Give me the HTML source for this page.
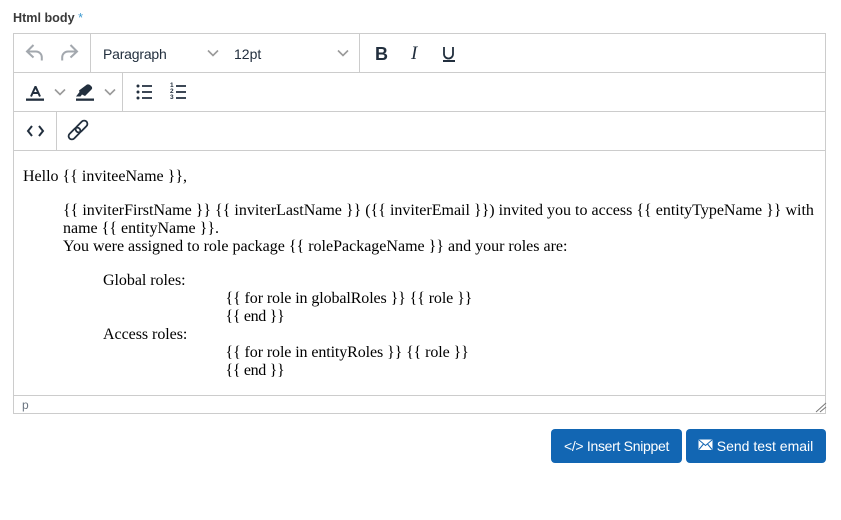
<!DOCTYPE html>
<html><head><meta charset="utf-8"><style>
html,body{margin:0;padding:0;background:#fff;width:841px;height:520px;overflow:hidden}
body{position:relative;font-family:"Liberation Sans",sans-serif}
.a{position:absolute}
.t{position:absolute;white-space:nowrap;font-family:"Liberation Serif",serif;font-size:16px;line-height:18px;color:#000}
.line{position:absolute;background:#ccc}
.ui{position:absolute;white-space:nowrap;font-size:14px;line-height:16px;color:#222f3e}
svg{position:absolute;overflow:visible}
.btn{position:absolute;top:429px;height:34px;background:#1266b3;border-radius:4px;color:#fff;font-size:14px;line-height:34px;white-space:nowrap;text-align:center}
</style></head><body>
<div class="a" style="left:13px;top:10px;font-size:12.6px;line-height:16px;font-weight:bold;color:#3a3a3a;white-space:nowrap">Html body <span style="color:#3d9ad1;font-weight:normal">*</span></div>
<div class="a" style="left:13px;top:33px;width:811px;height:379px;border:1px solid #ccc"></div>
<div class="line" style="left:14px;top:72px;width:811px;height:1px"></div>
<div class="line" style="left:14px;top:111px;width:811px;height:1px"></div>
<div class="line" style="left:14px;top:150px;width:811px;height:1px"></div>
<div class="line" style="left:14px;top:395px;width:811px;height:1px"></div>
<div class="line" style="left:90px;top:34px;width:1px;height:38px"></div>
<div class="line" style="left:359px;top:34px;width:1px;height:38px"></div>
<div class="line" style="left:122px;top:73px;width:1px;height:38px"></div>
<div class="line" style="left:56px;top:112px;width:1px;height:38px"></div>

<svg style="left:0;top:0" width="841" height="160" fill="none">
<path d="M33.500 45 L27 51.500 L33.500 57.500 M27 51.500 H36 A5.800 5.800 0 0 1 41.800 57.300 V60.500" stroke="#a3a8ae" stroke-width="2"/>
<path d="M70.500 45 L77 51.500 L70.500 57.500 M77 51.500 H68 A5.800 5.800 0 0 0 62.200 57.300 V60.500" stroke="#a3a8ae" stroke-width="2"/>
<path d="M208 50.500 L213 55.500 L218 50.500 M338 50.500 L343 55.500 L348 50.500 M55 89.500 L60 94.500 L65 89.500 M105 89.500 L110 94.500 L115 89.500" stroke="#9a9a9a" stroke-width="1.600"/>
<path d="M31 96.500 L35.300 87 H35.700 L40 96.500 M32.500 93 H38.500" stroke="#222f3e" stroke-width="2"/>
<rect x="26" y="98.500" width="18" height="2.300" fill="#222f3e"/>
<path d="M87 84.500 Q88.500 84 90 85 L92 87 Q92.500 88.500 91.500 89.500 L85 96 L82 94.500 L80.500 96.500 H76 L79.500 92 L79 90.500 Z" fill="#222f3e"/>
<rect x="76" y="98.500" width="18" height="2.300" fill="#222f3e"/>
<path d="M142 86 H152 M142 92 H152 M142 98 H152 M176 86 H186 M176 92 H186 M176 98 H186" stroke="#222f3e" stroke-width="1.700"/>
<circle cx="138" cy="86" r="1.500" fill="#222f3e"/><circle cx="138" cy="92" r="1.500" fill="#222f3e"/><circle cx="138" cy="98" r="1.500" fill="#222f3e"/>
<path d="M32 126 L28 131 L32 136 M39 126 L43 131 L39 136" stroke="#222f3e" stroke-width="2"/>
<rect x="78.250" y="119.500" width="6.500" height="14" rx="3.250" transform="rotate(45 81.500 126.500)" stroke="#222f3e" stroke-width="1.800"/>
<rect x="71.250" y="126.500" width="6.500" height="14" rx="3.250" transform="rotate(45 74.500 133.500)" stroke="#222f3e" stroke-width="1.800"/>
<path d="M826 403 L816 412 M826 407 L820 412" stroke="#777" stroke-width="1"/>
<path d="M444 47 V54 A4.500 4.500 0 0 0 453 54 V47" stroke="#222f3e" stroke-width="1.800"/>
</svg>

<div class="ui" style="left:103px;top:46px;letter-spacing:-.2px">Paragraph</div>
<div class="ui" style="left:234px;top:46px">12pt</div>
<div class="ui" style="left:375px;top:43px;font-size:18px;line-height:22px;font-weight:bold">B</div>
<div class="ui" style="left:411px;top:43px;font-size:19px;line-height:22px;font-family:'Liberation Serif',serif;font-style:italic">I</div>
<div class="a" style="left:443px;top:60px;width:12px;height:2px;background:#222f3e"></div>
<div class="ui" style="left:170px;top:83px;font-size:6.5px;line-height:6px;font-weight:bold">1<br>2<br>3</div>

<div class="t" style="left:23px;top:168px">Hello {{ inviteeName }},</div>
<div class="t" style="left:63px;top:202px">{{ inviterFirstName }} {{ inviterLastName }} ({{ inviterEmail }}) invited you to access {{ entityTypeName }} with</div>
<div class="t" style="left:63px;top:220px">name {{ entityName }}.</div>
<div class="t" style="left:63px;top:238px">You were assigned to role package {{ rolePackageName }} and your roles are:</div>
<div class="t" style="left:103px;top:272px;letter-spacing:-.04px">Global roles:</div>
<div class="t" style="left:225.5px;top:290px;letter-spacing:-.1px">{{ for role in globalRoles }} {{ role }}</div>
<div class="t" style="left:225.5px;top:308px;letter-spacing:-.33px">{{ end }}</div>
<div class="t" style="left:103px;top:326px;letter-spacing:-.04px">Access roles:</div>
<div class="t" style="left:225.5px;top:344px;letter-spacing:-.1px">{{ for role in entityRoles }} {{ role }}</div>
<div class="t" style="left:225.5px;top:362px;letter-spacing:-.33px">{{ end }}</div>

<div class="ui" style="left:22px;top:398px;font-size:12px;line-height:14px;color:#6a7480">p</div>

<div class="btn" style="left:551px;width:131px;letter-spacing:-.3px">&lt;/&gt; Insert Snippet</div>
<div class="btn" style="left:686px;width:140px"><span style="padding-left:18px">Send test email</span></div>
<svg style="left:698px;top:439px" width="15" height="12" fill="none"><rect x="0.500" y="0.500" width="14" height="10.500" fill="#fff" rx="1"/><path d="M1 1 L7.500 6.500 L14 1 M1 10.500 L5.500 5 M14 10.500 L9.500 5" stroke="#1266b3" stroke-width="1"/></svg>
</body></html>
